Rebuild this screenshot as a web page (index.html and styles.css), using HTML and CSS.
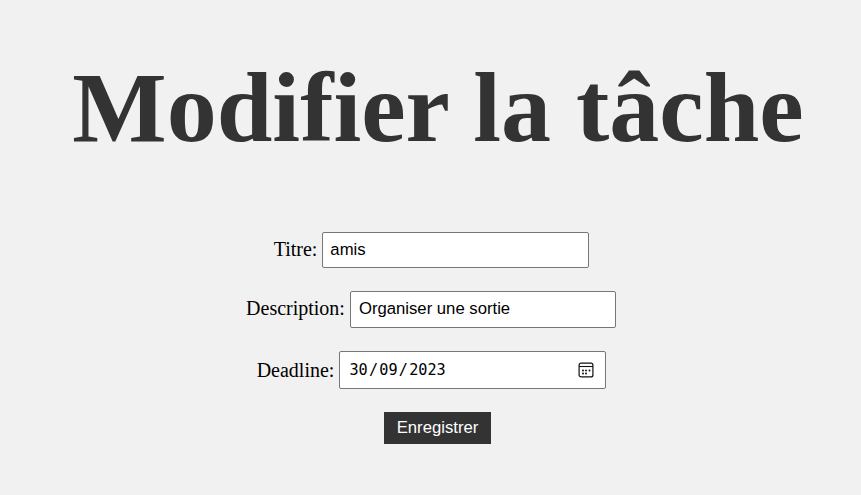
FILE: index.html
```html
<!DOCTYPE html>
<html lang="fr">
<head>
<meta charset="utf-8">
<title>Modifier la tâche</title>
<link rel="stylesheet" href="styles.css">
</head>
<body>
<h1>Modifier la tâche</h1>
<form>
<div class="row row-title"><label for="titre">Titre:</label><input id="titre" class="field" type="text" value="amis"></div>
<div class="row row-desc"><label for="desc">Description:</label><input id="desc" class="field" type="text" value="Organiser une sortie"></div>
<div class="row row-date"><label>Deadline:</label><div class="field date"><span>30</span><i>/</i><span>09</span><i>/</i><span>2023</span>
<svg class="calendar" viewBox="0 0 16 16" width="16" height="16"><rect x="1.1" y="1.1" width="13.8" height="13.8" rx="2" fill="none" stroke="#111" stroke-width="1.2"/><path d="M1 4.5h14" stroke="#111" stroke-width="1.1"/><g fill="#111"><circle cx="5" cy="8.5" r="1"/><circle cx="8" cy="8.5" r="1"/><circle cx="11.5" cy="8.5" r="1"/><circle cx="5" cy="11.5" r="1"/><circle cx="8" cy="11.5" r="1"/></g></svg></div></div>
<button type="button">Enregistrer</button>
</form>
</body>
</html>
```
FILE: styles.css
```css
* { box-sizing: border-box; }
body { margin: 0; background: #f1f1f1; font-family: "Liberation Serif", serif; color: #000; }
h1 { margin: 50px 0 0 15px; height: 115px; line-height: 115px; text-align: center; font-size: 100px; color: #333; white-space: nowrap; }
form { display: flex; flex-direction: column; align-items: center; padding-top: 67px; }
.row { display: flex; align-items: center; gap: 5px; padding-left: 2px; font-size: 20px; }
.row label { line-height: 23px; padding-bottom: 2px; }
.field { width: 267px; height: 36px; margin: 0; padding: 0 8px; border: 1px solid #767676; border-radius: 2px; background: #fff; color: #000; font: 16.7px "Liberation Sans", sans-serif; }
.row-title label { padding-bottom: 1px; }
.row-title .field { padding-left: 7px; }
.row-desc { margin-top: 23px; gap: 5.5px; padding-left: 1.5px; }
.row-desc .field { width: 266px; height: 37px; padding: 0 8px 2px 7.5px; }
.row-date { margin-top: 23px; }
.row-date label { padding-bottom: 0; }
.date { display: flex; align-items: center; height: 38px; padding: 0 11px 0 9px; font: 15.2px "DejaVu Sans Mono", monospace; }
.date i { font-style: normal; width: 11.6px; text-align: center; }
.calendar { margin-left: auto; margin-bottom: 1px; }
button { margin: 23px 0 0 14px; width: 107px; height: 32px; padding: 0; border: 0; background: #333; color: #fff; font: 16.7px "Liberation Sans", sans-serif; }
```
